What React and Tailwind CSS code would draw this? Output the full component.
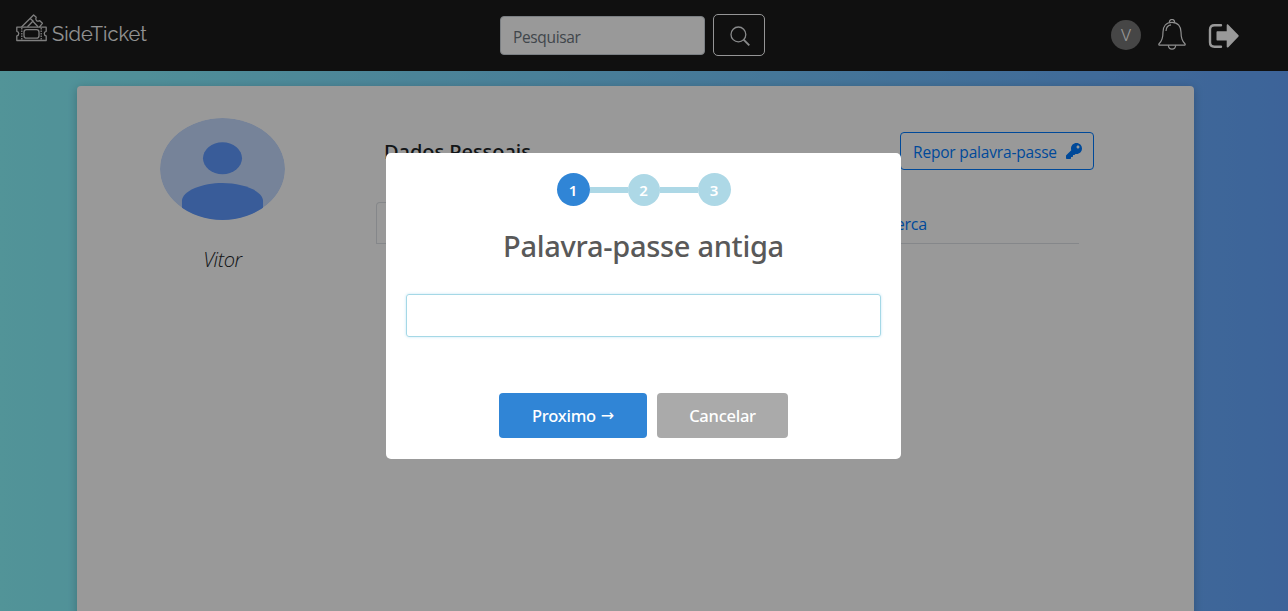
import React from "react";

function TicketsLogo() {
  return (
    <svg className="h-[28px] w-[31px]" viewBox="0 0 31 28" fill="none" stroke="#d4d4d4" strokeWidth="1.3" strokeLinejoin="round">
      <path d="M.8 13.200h29.400v4.100c-2.600.3-2.600 4.300 0 4.600v4.600H.8v-4.600c2.600-.3 2.600-4.300 0-4.600z" />
      <rect x="8" y="15.600" width="15" height="8.600" rx="2.500" />
      <path d="M5.800 14v12M25.200 14v12" strokeDasharray="1.5 1" />
      <path d="M5.500 13 17.600 1l2.600 2.300c-1.400 2.400.8 4.800 3.600 3.400l2.600 2.600-2.900 3.700" />
      <path d="M11.500 12.800 16.800 7.300l5.200 5.500M14.200 4.600l3.400 3" />
    </svg>
  );
}

function SearchIcon() {
  return (
    <svg className="h-5 w-5" viewBox="0 0 20 20" fill="none" stroke="#e4e6e8" strokeWidth="1.3">
      <circle cx="8.400" cy="8.400" r="7.400" />
      <path d="m13.600 13.600 5.700 5.700" strokeWidth="1.900" />
    </svg>
  );
}

function BellIcon() {
  return (
    <svg className="h-[32px] w-[28px]" viewBox="0 0 28 32" fill="none" stroke="#f0f0f0" strokeWidth="1.200" strokeLinejoin="round">
      <path d="M14 3.300C8 3.300 5 7.500 5 13c0 6.300-.7 8.900-3.900 11.700-.6.600-.2 1.500.6 1.500h24.600c.8 0 1.200-.9.600-1.500C23.700 21.900 23 19.300 23 13c0-5.500-3-9.700-9-9.700z" />
      <path d="M11.400 3.500c-.3-4 5.500-4 5.200 0M10.300 26.400c.6 5 6.800 5 7.400 0M8 12c.1-3.400 2-5.800 5-6.200" />
    </svg>
  );
}

function SignOutIcon() {
  return (
    <svg className="h-[26px] w-[32px]" viewBox="0 0 32 26">
      <path d="M13 2.200H6.500c-3 0-4.500 1.500-4.500 4.500v12.600c0 3 1.500 4.500 4.500 4.500H13" fill="none" stroke="#fff" strokeWidth="2.400" strokeLinecap="round" />
      <path d="M9.500 8.300h9.200V2.300c0-1 .9-1.300 1.600-.6l10 10.300c.6.600.6 1.200 0 1.800l-10 10.400c-.7.700-1.600.4-1.600-.6v-6H9.500c-.7 0-1-.4-1-1V9.300c0-.7.400-1 1-1z" fill="#fff" />
    </svg>
  );
}

function KeyIcon() {
  return (
    <svg className="h-4 w-4" viewBox="0 0 512 512" fill="#007bff">
      <path d="M512 176c0 97.200-78.800 176-176 176-11.200 0-22.200-1.100-32.800-3.100l-24 27c-4.600 5.200-11 8.100-17.900 8.100H224v40c0 13.300-10.700 24-24 24h-40v40c0 13.300-10.700 24-24 24H24c-13.300 0-24-10.700-24-24v-78.100c0-6.400 2.500-12.500 7-17l161.800-161.800C163 214 160 195.400 160 176 160 78.800 238.800 0 336 0s176 78.500 176 176zM336 128c0 26.500 21.500 48 48 48s48-21.500 48-48-21.500-48-48-48-48 21.500-48 48z" />
    </svg>
  );
}

function Avatar() {
  return (
    <svg className="h-[102px] w-[125px]" viewBox="0 0 128 128" preserveAspectRatio="none">
      <clipPath id="avatar-clip"><circle cx="64" cy="64" r="64" /></clipPath>
      <g clipPath="url(#avatar-clip)">
        <circle cx="64" cy="64" r="64" fill="#c5dbff" />
        <circle cx="64" cy="50.500" r="20" fill="#5f99ff" />
        <path d="M22.500 128V104C22.500 91 44 81.500 64 81.500s41.500 9.500 41.500 22.500v24z" fill="#5f99ff" />
      </g>
    </svg>
  );
}

function Header() {
  return (
    <header className="flex h-[71px] shrink-0 items-start bg-[#1c1c1c]">
      <div className="flex w-[484px] items-start pl-[16px] pt-[14px]">
        <TicketsLogo />
        <span className="ml-[5px] mt-[4px] font-['Raleway','Lato',sans-serif] text-[20px] leading-8 tracking-[0.050px] text-[#f4f4f4]">SideTicket</span>
      </div>
      <div className="flex flex-1 items-start gap-2 pl-4 pt-[14px]">
        <input placeholder="Pesquisar" className="mt-[2px] h-[39px] w-[205px] rounded-[4px] border border-[#ced4da] bg-white px-3 pt-[2px] text-[15.500px] tracking-[-0.350px] placeholder:text-[#6c757d]" />
        <button className="flex h-[42px] w-[52px] items-center justify-center rounded-[5px] border border-[#f8f9fa] pl-px pt-[2px]"><SearchIcon /></button>
      </div>
      <div className="flex items-center pr-[48px] pt-[19px]">
        <span className="flex size-[30px] items-center justify-center rounded-full bg-[#757575] pt-[2px] font-['Roboto',sans-serif] text-[17px] font-light text-white">V</span>
        <span className="ml-[17px]"><BellIcon /></span>
        <span className="ml-[22px] pt-px"><SignOutIcon /></span>
      </div>
    </header>
  );
}

function ProfileCard() {
  return (
    <main className="ml-[77px] mt-[15px] flex h-[600px] w-[1117px] shrink-0 rounded-[4px] bg-white shadow-[0_2px_10px_rgba(0,0,0,0.22)]">
      <aside className="flex w-[291px] flex-col items-center pt-8">
        <Avatar />
        <span className="mt-[25px] text-[20px] font-light italic leading-[30px] tracking-[-0.400px] text-[#212529]">Vitor</span>
      </aside>
      <section className="flex-1 pl-[8px] pt-[46px]">
        <div className="flex justify-between pr-[100px]">
          <h2 className="mt-[8px] pl-[8px] font-['Noto_Sans',sans-serif] text-[20px] font-medium leading-6 tracking-[-0.050px] text-[#212529]">Dados Pessoais</h2>
          <button className="flex h-[38px] w-[194px] items-center gap-[9px] rounded-[4px] border border-[#007bff] pl-[12px] text-[15.500px] tracking-[-0.180px] text-[#007bff]">
            <span className="whitespace-nowrap pt-[3px]">Repor palavra-passe</span><KeyIcon />
          </button>
        </div>
        <div className="mt-[32px] flex h-[42px] w-[703px] border-b border-[#dee2e6]">
          <div className="w-[260px] rounded-t-[4px] border border-b-0 border-[#dee2e6]" />
          <div className="flex w-[291px] items-center justify-end pt-[3px] text-[16px] tracking-[-0.200px] text-[#007bff]">Acerca</div>
        </div>
      </section>
    </main>
  );
}

function Steps() {
  return (
    <ol className="flex items-center font-['Noto_Sans',sans-serif] text-[15px] font-semibold text-white">
      <li className="flex size-[33px] items-center justify-center rounded-full bg-[#3085d6] pt-px">1</li>
      <li className="h-[6px] w-[38px] bg-[#add8e6]" />
      <li className="flex size-[32px] items-center justify-center rounded-full bg-[#add8e6] pt-px">2</li>
      <li className="h-[6px] w-[38px] bg-[#add8e6]" />
      <li className="flex size-[33px] items-center justify-center rounded-full bg-[#add8e6] pt-px">3</li>
    </ol>
  );
}

function PasswordDialog() {
  return (
    <div className="fixed inset-0 flex items-center justify-center bg-black/40 pr-px pt-px">
      <div role="dialog" className="flex h-[305.500px] w-[515.500px] flex-col items-center rounded-[5px] bg-white px-5 pt-5">
        <Steps />
        <h1 className="mt-[18px] font-['Noto_Sans',sans-serif] text-[29px] font-medium leading-[44px] tracking-[-0.300px] text-[#595959]">Palavra-passe antiga</h1>
        <input type="password" className="mt-[26px] h-[43px] w-[475px] rounded-[3px] border border-[#a5d8e6] shadow-[0_0_3px_#c4e6f5]" />
        <div className="mt-[56px] flex gap-[10px] font-['Noto_Sans',sans-serif] text-[16.500px] font-medium tracking-[-0.250px] text-white">
          <button className="flex h-[45px] w-[148px] items-center justify-center gap-[5px] rounded-[4px] bg-[#3085d6] pt-px">Proximo <span className="font-['DejaVu_Sans',sans-serif] text-[16px] font-normal">→</span></button>
          <button className="flex h-[45px] w-[131px] items-center justify-center rounded-[4px] bg-[#aaa] pt-px">Cancelar</button>
        </div>
      </div>
    </div>
  );
}

export default function App() {
  return (
    <div className="flex h-[611px] w-full flex-col overflow-hidden bg-[linear-gradient(90deg,#89f7fe_0%,#66a6ff_100%)] font-['Open_Sans',sans-serif]">
      <Header />
      <ProfileCard />
      <PasswordDialog />
    </div>
  );
}
